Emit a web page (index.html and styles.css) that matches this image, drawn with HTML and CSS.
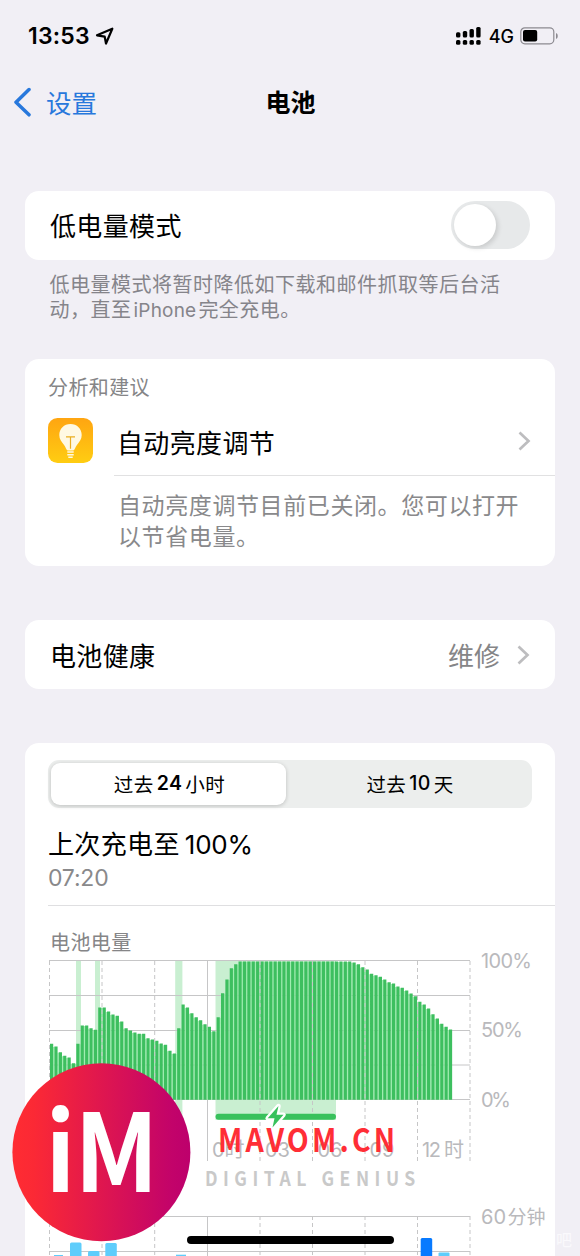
FILE: index.html
```html
<!DOCTYPE html>
<html lang="zh-CN">
<head>
<meta charset="utf-8">
<title>电池</title>
<link rel="stylesheet" href="styles.css">
</head>
<body>
<div class="screen">
  <header class="status">
    <div class="clock"><span>13:53</span>
      <svg width="20" height="20" viewBox="0 0 20 20"><path d="M2 9.3 17.3 2.7 11 17.5 9.7 10.7Z" fill="none" stroke="#000" stroke-width="2.2" stroke-linejoin="round"/></svg>
    </div>
    <div class="signals">
      <svg width="26" height="20" viewBox="0 0 26 20"><rect x="0" y="6.2" width="4.4" height="5.3" rx="1.5"/><rect x="6.8" y="5" width="4.4" height="6.5" rx="1.5"/><rect x="13.5" y="3" width="4.4" height="8.5" rx="1.5"/><rect x="20.2" y="1" width="4.4" height="10.5" rx="1.5"/><rect x="0" y="14" width="4.4" height="4.8" rx="1.5"/><rect x="6.8" y="14" width="4.4" height="4.8" rx="1.5"/><rect x="13.5" y="14" width="4.4" height="4.8" rx="1.5"/><rect x="20.2" y="14" width="4.4" height="4.8" rx="1.5"/></svg>
      <span class="network">4G</span>
      <svg width="39" height="18" viewBox="0 0 39 18"><rect x=".8" y=".8" width="33" height="16" rx="4" fill="none" stroke="#8c8a90" stroke-width="1.2"/><rect x="3" y="3" width="14.2" height="11.5" rx="2"/><path d="M36 6q1.8.6 1.8 3T36 12Z" fill="#8c8a90"/></svg>
    </div>
  </header>
  <nav class="nav">
    <svg class="back-icon" width="18" height="30" viewBox="0 0 18 30"><path d="M16 2.5 3 15.2 16 27.8" fill="none" stroke="#2878dc" stroke-width="3.5" stroke-linecap="round" stroke-linejoin="round"/></svg>
    <span class="back">设置</span>
    <h1>电池</h1>
  </nav>

  <main>
    <section class="card row power">
      <span class="label">低电量模式</span>
      <span class="switch"><span class="knob"></span></span>
    </section>
    <p class="note">低电量模式将暂时降低如下载和邮件抓取等后台活<br>动，直至<span class="latin">iPhone</span>完全充电。</p>

    <section class="card advice">
      <h2 class="caption">分析和建议</h2>
      <div class="advice-grid">
        <svg class="bulb" width="45" height="45" viewBox="0 0 45 45">
          <defs><linearGradient id="sun" x1="0" y1="0" x2="0" y2="1"><stop offset="0" stop-color="#ffa511"/><stop offset="1" stop-color="#ffcd12"/></linearGradient></defs>
          <rect width="45" height="45" rx="9.5" fill="url(#sun)"/>
          <path d="M22.5 6C16 6 11.3 10.8 11.3 17c0 4.2 2.2 6.8 4.6 9.7 1.8 2.2 2.2 5.3 3.8 5.8h5.6c1.6-.5 2-3.6 3.8-5.8 2.4-2.9 4.6-5.5 4.6-9.7C33.7 10.8 29 6 22.5 6Z" fill="#fff9e3"/>
          <path d="M18 18.8h9M22.5 18.8v12" fill="none" stroke="#eaae22" stroke-width="1.2"/>
          <path d="M19.3 34h6.4M19.3 36.7h6.4M20.3 39.3h4.4" stroke="#fff9e3" stroke-width="1.6"/>
        </svg>
        <div class="advice-main">
          <span class="label">自动亮度调节</span>
          <svg width="14" height="22" viewBox="0 0 14 22"><path d="m2.5 2.5 9 8.5-9 8.5" fill="none" stroke="#bdbdbf" stroke-width="2.7"/></svg>
        </div>
        <p class="advice-text">自动亮度调节目前已关闭。您可以打开<br>以节省电量。</p>
      </div>
    </section>

    <section class="card row health">
      <span class="label">电池健康</span>
      <span class="value">维修</span>
      <svg width="14" height="22" viewBox="0 0 14 22"><path d="m2.5 2.5 9 8.5-9 8.5" fill="none" stroke="#bdbdbf" stroke-width="2.7"/></svg>
    </section>

    <section class="card usage">
      <div class="segments">
        <span class="segment active">过去<b>24</b>小时</span>
        <span class="segment">过去<b>10</b>天</span>
      </div>
      <div class="last-charge">
        <div class="label">上次充电至<span class="percent">100%</span></div>
        <div class="time">07:20</div>
      </div>
      <h2 class="caption level-title">电池电量</h2>
      <svg class="chart" width="530" height="301" viewBox="25 955 530 301">
        <g fill="#c9efd1">
          <rect x="76" y="961" width="5" height="159"/><rect x="95" y="961" width="5" height="159"/><rect x="175.2" y="961" width="7.2" height="159"/><rect x="215.5" y="961" width="120.5" height="159"/>
        </g>
        <path d="M49 960.5H470M49 995.5H470M49 1030.5H470M49 1065H470M49 1099.5H470M49 1216.5H470M49 1251.5H470M207.5 961V1161M207.5 1216V1256" class="grid"/>
        <path id="gaps" class="gap-lines"/>
        <path id="bars" class="bar-lines"/>
        <path d="M49.5 961V1161M102 961V1161M154.7 961V1161M260 961V1161M312.5 961V1161M365 961V1161M417.5 961V1161M470 961V1161M49.5 1216V1256M102 1216V1256M154.7 1216V1256M260 1216V1256M312.5 1216V1256M365 1216V1256M417.5 1216V1256M470 1216V1256" class="grid dashed"/>
        <path d="M218.5 1116.8H333" stroke="#38c15c" stroke-width="6" stroke-linecap="round"/>
        <path d="M278.5 1106 267.7 1118.3H274.5L272.5 1127.5 283.5 1114.7H276.5Z" fill="#38c15c" stroke="#fff" stroke-width="4.6" stroke-linejoin="round" paint-order="stroke"/>
        <g class="axis">
          <text x="481" y="967.5" textLength="51">100%</text><text x="481" y="1037" textLength="42">50%</text><text x="481" y="1106.5" textLength="30">0%</text>
          <text x="212" y="1156.5">0时</text><text x="265" y="1156.5">03</text><text x="317.5" y="1156.5">06</text><text x="369.5" y="1156.5">09</text><text x="422" y="1156.5" textLength="42">12 时</text>
          <text x="481" y="1224">60</text><text x="507.5" y="1224" font-size="19">分钟</text>
        </g>
        <g fill="#5fcdfb"><rect x="70" y="1242.5" width="11.5" height="16" rx="1.5"/><rect x="88" y="1251" width="11.5" height="8" rx="1.5"/><rect x="105.3" y="1243" width="11.5" height="16" rx="1.5"/><rect x="54" y="1255" width="9" height="3"/><rect x="176" y="1254.7" width="10" height="3"/><rect x="438.5" y="1252.5" width="11" height="6" rx="1"/></g>
        <rect x="420.7" y="1238" width="11.5" height="20" rx="1.5" fill="#087aff"/>
      </svg>
    </section>
  </main>

  <svg class="brand" width="420" height="190" viewBox="0 1060 420 190">
    <defs><linearGradient id="badge"><stop offset="0" stop-color="#ff2c32"/><stop offset=".12" stop-color="#fb2935"/><stop offset=".9" stop-color="#c2036a"/><stop offset="1" stop-color="#bd006c"/></linearGradient></defs>
    <circle cx="101.4" cy="1152.2" r="89" fill="url(#badge)"/>
    <text class="badge-text" transform="translate(45.5 1191.7) scale(.91 1)">i</text>
    <text class="badge-text" transform="translate(74.5 1191.7) scale(.91 1)">M</text>
    <text class="brand-name" transform="translate(218 1152) scale(.89 1)" textLength="199">MAVOM.CN</text>
    <text class="brand-tag" transform="translate(205 1186) scale(.88 1)" textLength="239">DIGITAL GENIUS</text>
  </svg>
  <span class="corner">吧</span>
  <div class="home"></div>
</div>
<script src="chart.js"></script>
</body>
</html>
```
FILE: styles.css
```css
* { box-sizing: border-box; }
body { margin: 0; background: #f1eff5; }
.screen {
  position: relative;
  width: 580px;
  height: 1256px;
  overflow: hidden;
  color: #000;
  font-family: Inter, "Noto Sans CJK SC", sans-serif;
  font-weight: 400;
}
h1, h2, p { margin: 0; font-weight: 400; }
svg { display: block; flex: none; }

.status { display: flex; justify-content: space-between; align-items: center; height: 72px; padding: 0 21px 0 28px; }
.clock { display: flex; align-items: center; gap: 5px; font-size: 23px; font-weight: 600; letter-spacing: .2px; }
.signals { display: flex; align-items: center; }
.network { margin: 0 6px 0 7px; font-size: 18px; font-weight: 500; }

.nav { display: grid; grid-template-columns: 33px 1fr auto 1fr; align-items: center; height: 60px; padding: 0 13px; font-size: 25.5px; }
.nav .back-icon { width: 18px; }
.nav .back { color: #2878dc; transform: translateY(-1px); }
.nav h1 { grid-column: 3; font-size: 25px; font-weight: 600; transform: translate(-16px, -1px); }

main { padding: 59px 25px 0; }
.card { background: #fff; border-radius: 14px; }
.row { display: flex; align-items: center; height: 69px; padding: 0 25px; }
.label { font-size: 26px; line-height: 36px; letter-spacing: .35px; white-space: nowrap; }
.row .label { padding-top: 4px; }
.power { justify-content: space-between; padding-bottom: 1px; }
.switch { width: 79px; height: 48px; padding: 3px; border-radius: 24px; background: #e7e9ea; }
.knob { display: block; width: 42px; height: 42px; border-radius: 50%; background: #fff; box-shadow: 2px 2px 5px #0002; }

.note { padding: 13px 24.5px 0; height: 99px; color: #85848a; font-size: 20px; line-height: 25px; letter-spacing: .5px; white-space: nowrap; }
.note .latin { margin: 0 2px; font-size: 19px; letter-spacing: .2px; }
.caption { color: #858587; font-size: 20px; line-height: 28px; letter-spacing: .4px; }
.advice { height: 207px; padding: 15px 0 0 23px; }
.advice-grid { display: grid; grid-template-columns: 66px 1fr; grid-template-rows: 74px 1fr; }
.bulb { margin-top: 15.5px; }
.advice-main { display: flex; justify-content: space-between; align-items: center; padding: 5px 24px 0 3px; border-bottom: 1.5px solid #e1e1e2; }
.advice-main .label { padding-top: 5px; }
.advice-text { grid-column: 2; padding: 15px 0 0 4px; color: #89898b; font-size: 23px; line-height: 31px; letter-spacing: .6px; white-space: nowrap; }

.health { margin-top: 54px; }
.health .value { margin-left: auto; margin-right: 16px; color: #858587; font-size: 26px; }

.usage { display: flex; flex-direction: column; margin-top: 54px; height: 540px; padding-top: 17px; }
.segments { display: grid; grid-template-columns: 238px 1fr; height: 48px; margin: 0 23px; padding: 3px; background: #eceeed; border-radius: 11px; }
.segment { display: flex; align-items: center; justify-content: center; padding: 0 0 2px 2px; font-size: 19.5px; letter-spacing: .4px; font-weight: 400; }
.segment b { font-weight: 500; margin: 0 3px; }
.segment.active { width: 235px; border-radius: 9px; background: #fff; font-weight: 400; box-shadow: 0 1px 4px #0003; }
.segment.active b { font-weight: 600; }
.last-charge { height: 98px; margin-left: 23px; padding-top: 19px; border-bottom: 1.5px solid #dfdfe1; }
.percent { margin-left: 5px; font-size: 26px; letter-spacing: -.2px; }
.time { color: #89898b; font-size: 23px; line-height: 31px; letter-spacing: -.2px; }
.level-title { margin: 23px 0 -2px 25px; }

.chart { overflow: visible; }
.grid { fill: none; stroke: #c6c6c7; stroke-width: 1; }
.dashed { stroke-dasharray: 4 3; }
.bar-lines { fill: none; stroke: #3dbf5f; stroke-width: 3.2; }
.gap-lines { fill: none; stroke: #a0edb1; stroke-width: 1.4; }
.axis { fill: #b9b9bc; font-size: 20px; }

.brand { position: absolute; left: 0; top: 1060px; }
.badge-text { fill: #fff; font: 700 108px "Noto Sans CJK SC", sans-serif; }
.brand-name { fill: #ff2e36; font: 700 32px "Noto Sans CJK SC", sans-serif; }
.brand-tag { fill: #c9c9c9; font: 700 20px "Noto Sans CJK SC", sans-serif; }
.corner { position: absolute; left: 556px; top: 1229px; color: #faf9fc; font-size: 16px; line-height: 22px; }
.home { position: absolute; left: 187px; top: 1236px; width: 207px; height: 8px; border-radius: 4px; background: #000; }
```
FILE: chart.js
```js
// Top edge of each quarter-hour battery bar, in chart units.
const full = Array(26).fill(961);
const tops = [
  1043.3, 1046, 1051.7, 1055.3, 1057, 1062.7, 1043.3, 1025, 1025, 1027.7, 1029.3,
  1007, 1007, 1011, 1014, 1015.3, 1021, 1027.7, 1030, 1032, 1033.3, 1033.3, 1037.7,
  1039, 1040.3, 1043, 1044.3, 1050.3, 1053, 1027.7, 1004, 1007, 1012.7, 1016.7,
  1019.7, 1023.7, 1026.3, 1030.7, 1016.7, 992.7, 979, 967.7, 963.7, ...full,
  962, 963.7, 966.7, 969, 973.3, 974.7, 976.3, 979, 981.7, 983, 986, 987.3, 990,
  993, 995.7, 1001.3, 1004, 1008, 1013.7, 1018, 1023.3, 1026.3, 1029
];
const pitch = 4.384;
const x = i => (51.6 + i * pitch).toFixed(2);
document.getElementById('bars').setAttribute('d',
  tops.map((y, i) => `M${x(i)} ${y + 0.5}V1099.8`).join(''));
document.getElementById('gaps').setAttribute('d',
  tops.slice(1).map((y, i) => `M${x(i + 0.5)} ${Math.max(y, tops[i]) + 1}V1099.8`).join(''));
```
